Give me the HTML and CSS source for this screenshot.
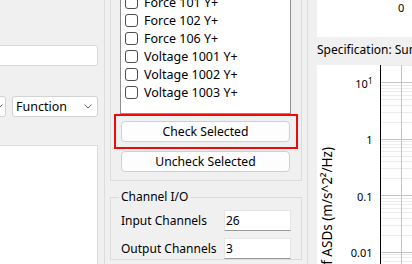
FILE: index.html
```html
<!DOCTYPE html>
<html>
<head>
<meta charset="utf-8">
<link rel="stylesheet" href="styles.css">
</head>
<body>
<div class="app">
  <div class="col-left">
    <div class="line-edit"></div>
    <div class="combo-row">
      <div class="combo combo-a">
        <svg class="chev" width="8" height="5" viewBox="0 0 8 5"><polyline points="0.5,0.5 4,4 7.5,0.5" fill="none" stroke="#606060" stroke-width="1"/></svg>
      </div>
      <div class="combo combo-fn">
        <span class="combo-text">Function</span>
        <svg class="chev" width="8" height="5" viewBox="0 0 8 5"><polyline points="0.5,0.5 4,4 7.5,0.5" fill="none" stroke="#606060" stroke-width="1"/></svg>
      </div>
    </div>
    <div class="list-white"></div>
  </div>

  <div class="col-mid">
    <div class="group">
      <div class="listbox">
        <div class="item"><span class="cb"></span><span>Force 101 Y+</span></div>
        <div class="item"><span class="cb"></span><span>Force 102 Y+</span></div>
        <div class="item"><span class="cb"></span><span>Force 106 Y+</span></div>
        <div class="item"><span class="cb"></span><span>Voltage 1001 Y+</span></div>
        <div class="item"><span class="cb"></span><span>Voltage 1002 Y+</span></div>
        <div class="item"><span class="cb"></span><span>Voltage 1003 Y+</span></div>
      </div>
      <div class="btn-wrap">
        <button class="btn">Check Selected</button>
        <span class="highlight"></span>
      </div>
      <button class="btn btn-second">Uncheck Selected</button>
    </div>
    <fieldset class="io">
      <legend>Channel I/O</legend>
      <div class="io-grid">
        <span class="io-label">Input Channels</span><div class="field">26</div>
        <span class="io-label">Output Channels</span><div class="field">3</div>
      </div>
    </fieldset>
  </div>

  <div class="col-right">
    <div class="panel">
      <div class="plot-top"><span class="tick0">0</span></div>
      <div class="spec">Specification: Sum</div>
      <div class="plot">
        <svg width="95" height="199" viewBox="0 0 95 199" shape-rendering="crispEdges">
          <g stroke="#ececec" stroke-width="1">
            <line x1="64" y1="0.5" x2="95" y2="0.5"/>
            <line x1="64" y1="20.5" x2="95" y2="20.5"/>
            <line x1="64" y1="23.5" x2="95" y2="23.5"/>
            <line x1="64" y1="26.5" x2="95" y2="26.5"/>
            <line x1="64" y1="30.5" x2="95" y2="30.5"/>
            <line x1="64" y1="34.5" x2="95" y2="34.5"/>
            <line x1="64" y1="40.5" x2="95" y2="40.5"/>
            <line x1="64" y1="47.5" x2="95" y2="47.5"/>
            <line x1="64" y1="57.5" x2="95" y2="57.5"/>
            <line x1="64" y1="76.5" x2="95" y2="76.5"/>
            <line x1="64" y1="79.5" x2="95" y2="79.5"/>
            <line x1="64" y1="82.5" x2="95" y2="82.5"/>
            <line x1="64" y1="86.5" x2="95" y2="86.5"/>
            <line x1="64" y1="91.5" x2="95" y2="91.5"/>
            <line x1="64" y1="96.5" x2="95" y2="96.5"/>
            <line x1="64" y1="103.5" x2="95" y2="103.5"/>
            <line x1="64" y1="113.5" x2="95" y2="113.5"/>
            <line x1="64" y1="133.5" x2="95" y2="133.5"/>
            <line x1="64" y1="136.5" x2="95" y2="136.5"/>
            <line x1="64" y1="139.5" x2="95" y2="139.5"/>
            <line x1="64" y1="143.5" x2="95" y2="143.5"/>
            <line x1="64" y1="147.5" x2="95" y2="147.5"/>
            <line x1="64" y1="153.5" x2="95" y2="153.5"/>
            <line x1="64" y1="160.5" x2="95" y2="160.5"/>
            <line x1="64" y1="170.5" x2="95" y2="170.5"/>
            <line x1="64" y1="189.5" x2="95" y2="189.5"/>
            <line x1="64" y1="192.5" x2="95" y2="192.5"/>
            <line x1="64" y1="196.5" x2="95" y2="196.5"/>
          </g>
          <g stroke="#c4c4c4" stroke-width="1">
            <line x1="64" y1="17.5" x2="95" y2="17.5"/>
            <line x1="64" y1="74.5" x2="95" y2="74.5"/>
            <line x1="64" y1="130.5" x2="95" y2="130.5"/>
            <line x1="64" y1="187.5" x2="95" y2="187.5"/>
            <line x1="84.5" y1="0" x2="84.5" y2="199"/>
          </g>
          <line x1="63.5" y1="0" x2="63.5" y2="199" stroke="#000" stroke-width="1"/>
          <g class="ticks" text-anchor="end">
            <text x="55.5" y="23">10<tspan class="sup" dy="-4">1</tspan></text>
            <text x="55.5" y="79">1</text>
            <text x="55.5" y="135.5">0.1</text>
            <text x="55.5" y="192">0.01</text>
          </g>
          <text class="ylabel" text-anchor="end" transform="translate(15,82) rotate(-90)">f ASDs (m/s^2²/Hz)</text>
        </svg>
      </div>
    </div>
  </div>
</div>
</body>
</html>
```
FILE: styles.css
```css
html, body {
  margin: 0;
  height: 264px;
  overflow: hidden;
  background: #f0f0f0;
  font-family: "Noto Sans", "Segoe UI", sans-serif;
  font-size: 12px;
  color: #000;
}

.app {
  display: flex;
  height: 264px;
  overflow: hidden;
}

/* Left column */
.col-left {
  flex: none;
  width: 98px;
  padding: 45px 6px 0 0;
  border-right: 1px solid #dcdcdc;
  display: flex;
  flex-direction: column;
}

.line-edit {
  height: 21px;
  box-sizing: border-box;
  margin-left: -20px;
  background: #fff;
  border: 1px solid #d9d9d9;
  border-radius: 3px;
}

.combo-row {
  display: flex;
  justify-content: flex-end;
  gap: 6px;
  margin-top: 30px;
}

.combo {
  flex: none;
  height: 21px;
  box-sizing: border-box;
  background: #fff;
  border: 1px solid #d3d3d3;
  border-radius: 3px;
  display: flex;
  align-items: center;
}

.combo-a {
  width: 40px;
}

.combo-fn {
  width: 86px;
  padding-left: 3px;
  font-size: 12.5px;
}

.combo-text {
  line-height: 16px;
}

.chev {
  margin-left: auto;
  margin-right: 5px;
  display: block;
}

.combo-a .chev {
  margin-right: 2px;
}

.list-white {
  flex: 1;
  margin-top: 28px;
  margin-left: -20px;
  background: #fff;
  border: 1px solid #dcdcdc;
  border-bottom: none;
}

/* Middle column */
.col-mid {
  flex: none;
  width: 197px;
  box-sizing: border-box;
  padding-left: 5px;
  margin-top: -16px;
}

.group {
  border: 1px solid #dcdcdc;
  padding: 4px 10px 8px 9px;
}

.listbox {
  background: #fff;
  border: 1px solid #8e8e8e;
  padding: 3px 0 12px 4px;
  font-size: 12.5px;
}

.item {
  display: flex;
  align-items: center;
  gap: 6px;
  height: 18px;
  white-space: nowrap;
}

.cb {
  flex: none;
  width: 13px;
  height: 13px;
  box-sizing: border-box;
  border: 1px solid #4d4d4d;
  border-radius: 3px;
  background: #fff;
}

.btn-wrap {
  position: relative;
  margin: 7px 1px 0 1px;
}

.btn {
  display: block;
  width: 100%;
  height: 21px;
  box-sizing: border-box;
  padding: 0;
  border: 1px solid #d0d0d0;
  border-radius: 4px;
  background: #fdfdfd;
  font: inherit;
  font-size: 12.2px;
  color: #000;
  line-height: 19px;
}

.btn-second {
  margin: 9px 1px 0 1px;
  width: calc(100% - 2px);
}

.highlight {
  position: absolute;
  top: -7px;
  left: -7px;
  right: -8px;
  bottom: -7px;
  border: 2px solid #ee0a0a;
  pointer-events: none;
}

.io {
  margin: 8px 0 0 0;
  padding: 5px 10px 0 10px;
  border: 1px solid #dcdcdc;
  min-width: 0;
}

.io legend {
  padding: 0 2px;
  margin-left: -2px;
  line-height: 16px;
}

.io-grid {
  display: grid;
  grid-template-columns: 103px 67px;
  grid-auto-rows: 21px;
  row-gap: 7px;
  align-items: center;
}

.io-label {
  white-space: nowrap;
}

.field {
  height: 21px;
  box-sizing: border-box;
  background: #fff;
  border: 1px solid #e6e6e6;
  border-bottom-color: #9a9a9a;
  padding-left: 1px;
  line-height: 19px;
}

/* Right column */
.col-right {
  flex: 1;
  min-width: 0;
  padding-left: 5px;
  overflow: hidden;
}

.panel {
  height: 100%;
  border-left: 1px solid #dcdcdc;
  padding-left: 9px;
  display: flex;
  flex-direction: column;
}

.plot-top {
  height: 37px;
  flex: none;
  background: #fff;
  padding-left: 81px;
  font-size: 11px;
  line-height: 15px;
}

.spec {
  flex: none;
  height: 28px;
  box-sizing: border-box;
  padding-top: 5px;
  line-height: 16px;
  white-space: nowrap;
}

.plot {
  flex: none;
  height: 199px;
  background: #fff;
}

.plot svg {
  display: block;
}

.ticks text {
  font-family: "Noto Sans", sans-serif;
  font-size: 11px;
  fill: #000;
}

.ticks .sup {
  font-size: 8px;
}

.ylabel {
  font-family: "Noto Sans", sans-serif;
  font-size: 13.5px;
  fill: #000;
}
```
